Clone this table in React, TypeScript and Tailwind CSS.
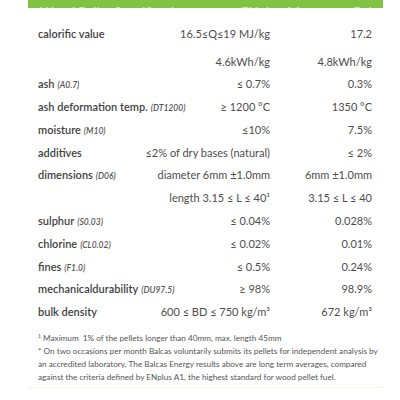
const font = { fontFamily: "Lato, 'Open Sans', sans-serif" };

type Row = { label: string; code?: string; spec: string; result: string };

const rows: Row[] = [
  { label: "ash", code: "(A0.7)", spec: "≤ 0.7%", result: "0.3%" },
  { label: "ash deformation temp.", code: "(DT1200)", spec: "≥ 1200 °C", result: "1350 °C" },
  { label: "moisture", code: "(M10)", spec: "≤10%", result: "7.5%" },
  { label: "additives", spec: "≤2% of dry bases (natural)", result: "≤ 2%" },
  { label: "dimensions", code: "(D06)", spec: "diameter 6mm ±1.0mm", result: "6mm ±1.0mm" },
  { label: "", spec: "length 3.15 ≤ L ≤ 40¹", result: "3.15 ≤ L ≤ 40" },
  { label: "sulphur", code: "(S0.03)", spec: "≤ 0.04%", result: "0.028%" },
  { label: "chlorine", code: "(CL0.02)", spec: "≤ 0.02%", result: "0.01%" },
  { label: "fines", code: "(F1.0)", spec: "≤ 0.5%", result: "0.24%" },
  { label: "mechanicaldurability", code: "(DU97.5)", spec: "≥ 98%", result: "98.9%" },
  { label: "bulk density", spec: "600 ≤ BD ≤ 750 kg/m³", result: "672 kg/m³" },
];

function Line({ label, code, spec, result }: Row) {
  return (
    <div className="flex items-center h-[22.8px] text-[11px]">
      <div className="font-semibold text-[#3f3f3f] whitespace-nowrap">
        {label}
        {code && <span className="italic font-semibold text-[8.5px] text-[#555] ml-[3px]">{code}</span>}
      </div>
      <div className="flex-1 text-right text-[#4d4d4d] whitespace-nowrap">{spec}</div>
      <div className="w-[102px] text-right text-[#4d4d4d] whitespace-nowrap">{result}</div>
    </div>
  );
}

export default function App() {
  return (
    <div className="w-[400px] h-[400px] bg-white overflow-hidden" style={font}>
      {/* header strip, title mostly scrolled out of view */}
      <div className="ml-[28px] w-[355px] h-[8px] bg-[#80c342] overflow-hidden flex items-end">
        <div className="flex shrink-0 text-white/60 font-bold text-[13px] leading-[13px] mb-[-11px] pl-[12px] gap-[52px]">
          <span>Wood Pellet Specification</span>
          <span>ENplus A1</span>
          <span>Balcas Energy</span>
        </div>
      </div>

      <div className="pl-[38px] w-[372px] pt-[15px]">
        <div className="flex items-center h-[23px] text-[11px]">
          <div className="font-semibold text-[#3f3f3f]">calorific value</div>
          <div className="flex-1 text-right text-[#4d4d4d]">16.5≤Q≤19 MJ/kg</div>
          <div className="w-[102px] text-right text-[#4d4d4d]">17.2</div>
        </div>
        <div className="flex items-center h-[21px] text-[11px] mt-[6px]">
          <div className="flex-1 text-right text-[#4d4d4d]">4.6kWh/kg</div>
          <div className="w-[102px] text-right text-[#4d4d4d]">4.8kWh/kg</div>
        </div>
        {rows.map((r, i) => (
          <Line key={i} {...r} />
        ))}

        <div className="mt-[8px] text-[8.2px] leading-[13px] text-[#555] whitespace-nowrap">
          <p>
            <sup className="text-[5px]">1</sup> Maximum&nbsp; 1% of the pellets longer than 40mm, max. length 45mm
          </p>
          <p>* On two occasions per month Balcas voluntarily submits its pellets for independent analysis by</p>
          <p>an accredited laboratory. The Balcas Energy results above are long term averages, compared</p>
          <p>against the criteria defined by ENplus A1, the highest standard for wood pellet fuel.</p>
        </div>
      </div>
      <div className="ml-[28px] w-[355px] mt-[3px] border-t border-[#f1f6e8]" />
    </div>
  );
}
